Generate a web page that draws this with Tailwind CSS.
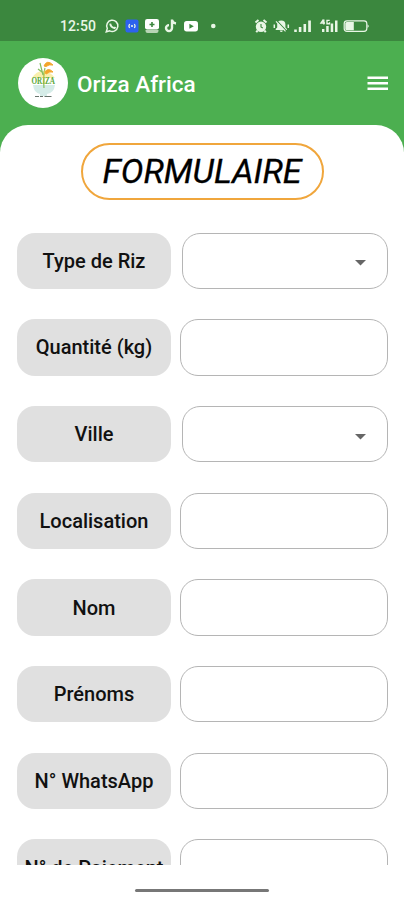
<!DOCTYPE html>
<html lang="fr">
<head>
<meta charset="utf-8">
<title>Oriza Africa</title>
<script src="https://cdn.jsdelivr.net/npm/@tailwindcss/browser@4"></script>
</head>
<body class="bg-white">
<div class="relative flex h-[900px] w-[404px] flex-col overflow-hidden bg-white font-['Roboto',sans-serif] text-[#111]">
  <!-- Status bar -->
  <div class="flex h-[41px] shrink-0 items-center bg-[#3b873e] pt-[11px] pl-[60px] text-[#e9f6e6]">
    <span class="w-[45px] text-[14px] leading-4 font-medium tracking-[0.1px]">12:50</span>
    <svg class="h-[16px] w-[266px]" viewBox="105 18 266 16" fill="currentColor">
      <g fill="none" stroke="currentColor" stroke-width="1.5"><path d="M106.3 31.8l1-3.4a5.6 5.6 0 1 1 2.4 2.4z"/><path d="M110.2 23.6q.5 3.6 4.3 4.6l1-1.2" stroke-width="1.9"/></g>
      <rect x="125.500" y="19.500" width="13" height="13" rx="2" fill="#2d62ed"/>
      <circle cx="132" cy="26" r="1.1"/><path d="M129.700 24q-1.600 2 0 4M134.300 24q1.600 2 0 4" fill="none" stroke="currentColor" stroke-width="1.200"/>
      <rect x="145" y="19" width="14" height="10.500" rx="2.200" fill="#fff"/><path d="M145.500 30h13v1q0 2-2 2h-9q-2 0-2-2z" fill="#b8d4b5"/><path d="M152 22v5M149.500 24.500h5" stroke="#3b873e" stroke-width="1.600"/>
      <path d="M172 19.500v8.600a3 3 0 1 1-3-3M172 20q.8 3 4 3.500" fill="none" stroke="currentColor" stroke-width="2.400"/>
      <rect x="184" y="21" width="14" height="10.500" rx="2.700" fill="#fff"/><path d="M189.400 23.800l4.400 2.500-4.400 2.500z" fill="#3b873e"/>
      <circle cx="213.300" cy="26" r="2.300"/>
      <circle cx="261" cy="26.700" r="5.200"/><path d="M255.500 22.500l3-2.500M266.500 22.500l-3-2.500M257.500 30.500l-1.200 1.800M264.500 30.500l1.200 1.800" stroke="currentColor" stroke-width="2"/><path d="M261 24v3l1.800 1" fill="none" stroke="#3b873e" stroke-width="1.100"/>
      <path d="M275.700 30v-1l1.500-1.500v-2.900a4.100 4.100 0 0 1 8.200 0v2.900l1.500 1.500v1zM279.700 30.600h3.200q-.4 1.500-1.600 1.500t-1.600-1.500z"/><path d="M274.300 24.500v3.500M288.300 24.500v3.500" stroke="currentColor" stroke-width="1.500"/><path d="M277.200 21.200l9.500 10" stroke="#3b873e" stroke-width="1.100"/><path d="M276 21.400l9.500 10" stroke="currentColor" stroke-width="1.200"/>
      <path d="M294.200 29.500h2.600v2.500h-2.600zM298.800 27h2.600v5h-2.600zM303.500 24h2.600v8h-2.600zM308.200 20.500h2.700v11.500h-2.700z"/>
      <path d="M323.500 19.500l-2.500 3.500h4M323.800 19.500v5M329.700 20.400h-2.700v3.300h2.500v-1.500" fill="none" stroke="currentColor" stroke-width="1.400"/>
      <path d="M322 29h2.400v3H322zM326.200 26h2.500v6h-2.500zM330.700 23.500h2.500v8.500h-2.500zM335 20.500h2.500v11.500H335z"/>
      <rect x="344.200" y="20.800" width="22.600" height="10.600" rx="2.800" fill="none" stroke="currentColor" stroke-width="1.200"/><path d="M346.800 22h7v8.200h-7q-1.500 0-1.500-1.500v-5.200q0-1.500 1.500-1.500z"/><path d="M367.500 24.200q2.500 1.900 0 3.800z"/>
    </svg>
  </div>

  <!-- App bar -->
  <header class="flex h-[111px] shrink-0 items-start bg-[#4caf50] pt-[17px] pr-[16px] pl-[18px]">
    <svg class="h-[50px] w-[50px] shrink-0" viewBox="0 0 50 50">
      <circle cx="25" cy="25" r="25" fill="#fff"/>
      <path d="M14 20q4-7 11-7t12 7z" fill="#f9efad"/>
      <path d="M15 27h22q-1 8-8 9v2h-7v-2q-6-1-7-9z" fill="#d5ece8"/>
      <path d="M26 30q-1-13 1-20M25 17l-3-12M24 14l-4-3" fill="none" stroke="#84bd62" stroke-width="1.200"/>
      <path d="M26 8q3-7 9-1-4-1-7 1.500zM27 14q3-5 8 0-3-1-7 2z" fill="#f3a52b" stroke="#f3a52b" stroke-width="1"/>
      <text x="13.500" y="25.800" font-family="Liberation Serif, serif" font-size="11" font-weight="700" textLength="23.500" lengthAdjust="spacingAndGlyphs" fill="#5aa83b">ORIZA</text>
      <path d="M26 26q-1-7 1-14" fill="none" stroke="#e5cc43" stroke-width=".8"/>
      <path d="M17 38.500h4M22 38.500h3M26.500 38.500h7" stroke="#68746d" stroke-width="1.100"/>
    </svg>
    <h1 class="mt-[1px] ml-[9px] flex h-[50px] items-center text-[22.500px] leading-[50px] font-medium text-white">Oriza Africa</h1>
    <svg class="mt-[18px] ml-auto h-[15px] w-[21px]" viewBox="0 0 21 15" fill="#fff"><path d="M.5.4h20.500v2.500H.5zM.5 6h20.500v2.500H.5zM.5 11.500h20.500V14H.5z"/></svg>
  </header>

  <!-- Scrolling form sheet -->
  <main class="-mt-[27px] h-[740px] shrink-0 overflow-hidden rounded-t-[28px] bg-white pt-[17.500px]">
    <div class="mx-auto flex h-[57px] w-[243px] items-center justify-center rounded-full border-2 border-[#f0a63c]">
      <h2 class="text-[34px] leading-none font-normal whitespace-nowrap text-black italic [-webkit-text-stroke:0.3px_black]">FORMULAIRE</h2>
    </div>
    <form class="mt-[33px] flex flex-col gap-[30.200px] pr-[16px] pl-[17px] text-[20px] font-medium">
      <div class="flex h-[56.500px] shrink-0 justify-between">
        <div class="flex w-[154px] items-center justify-center rounded-[18px] bg-[#e0e0e0]">Type de Riz</div>
        <div class="flex w-[206px] items-center justify-end rounded-[18px] border border-[#b5b5b5] pr-[21px]"><svg class="mt-[5px] h-[6px] w-[11px]" viewBox="0 0 11 6"><path d="M0 0h11L5.500 5.500z" fill="#666"/></svg></div>
      </div>
      <div class="flex h-[56.500px] shrink-0 justify-between">
        <div class="flex w-[154px] items-center justify-center rounded-[18px] bg-[#e0e0e0]">Quantité (kg)</div>
        <div class="w-[208px] rounded-[18px] border border-[#b5b5b5]"></div>
      </div>
      <div class="flex h-[56.500px] shrink-0 justify-between">
        <div class="flex w-[154px] items-center justify-center rounded-[18px] bg-[#e0e0e0]">Ville</div>
        <div class="flex w-[206px] items-center justify-end rounded-[18px] border border-[#b5b5b5] pr-[21px]"><svg class="mt-[5px] h-[6px] w-[11px]" viewBox="0 0 11 6"><path d="M0 0h11L5.500 5.500z" fill="#666"/></svg></div>
      </div>
      <div class="flex h-[56.500px] shrink-0 justify-between">
        <div class="flex w-[154px] items-center justify-center rounded-[18px] bg-[#e0e0e0]">Localisation</div>
        <div class="w-[208px] rounded-[18px] border border-[#b5b5b5]"></div>
      </div>
      <div class="flex h-[56.500px] shrink-0 justify-between">
        <div class="flex w-[154px] items-center justify-center rounded-[18px] bg-[#e0e0e0]">Nom</div>
        <div class="w-[208px] rounded-[18px] border border-[#b5b5b5]"></div>
      </div>
      <div class="flex h-[56.500px] shrink-0 justify-between">
        <div class="flex w-[154px] items-center justify-center rounded-[18px] bg-[#e0e0e0]">Prénoms</div>
        <div class="w-[208px] rounded-[18px] border border-[#b5b5b5]"></div>
      </div>
      <div class="flex h-[56.500px] shrink-0 justify-between">
        <div class="flex w-[154px] items-center justify-center rounded-[18px] bg-[#e0e0e0]">N° WhatsApp</div>
        <div class="w-[208px] rounded-[18px] border border-[#b5b5b5]"></div>
      </div>
      <div class="flex h-[56.500px] shrink-0 justify-between">
        <div class="flex w-[154px] items-center justify-center rounded-[18px] bg-[#e0e0e0] whitespace-nowrap">N° de Paiement</div>
        <div class="w-[208px] rounded-[18px] border border-[#b5b5b5]"></div>
      </div>
    </form>
  </main>

  <!-- Gesture navigation -->
  <footer class="flex flex-1 justify-center pt-[24px]"><div class="h-[3px] w-[134px] rounded-full bg-[#777]"></div></footer>
</div>
</body>
</html>
